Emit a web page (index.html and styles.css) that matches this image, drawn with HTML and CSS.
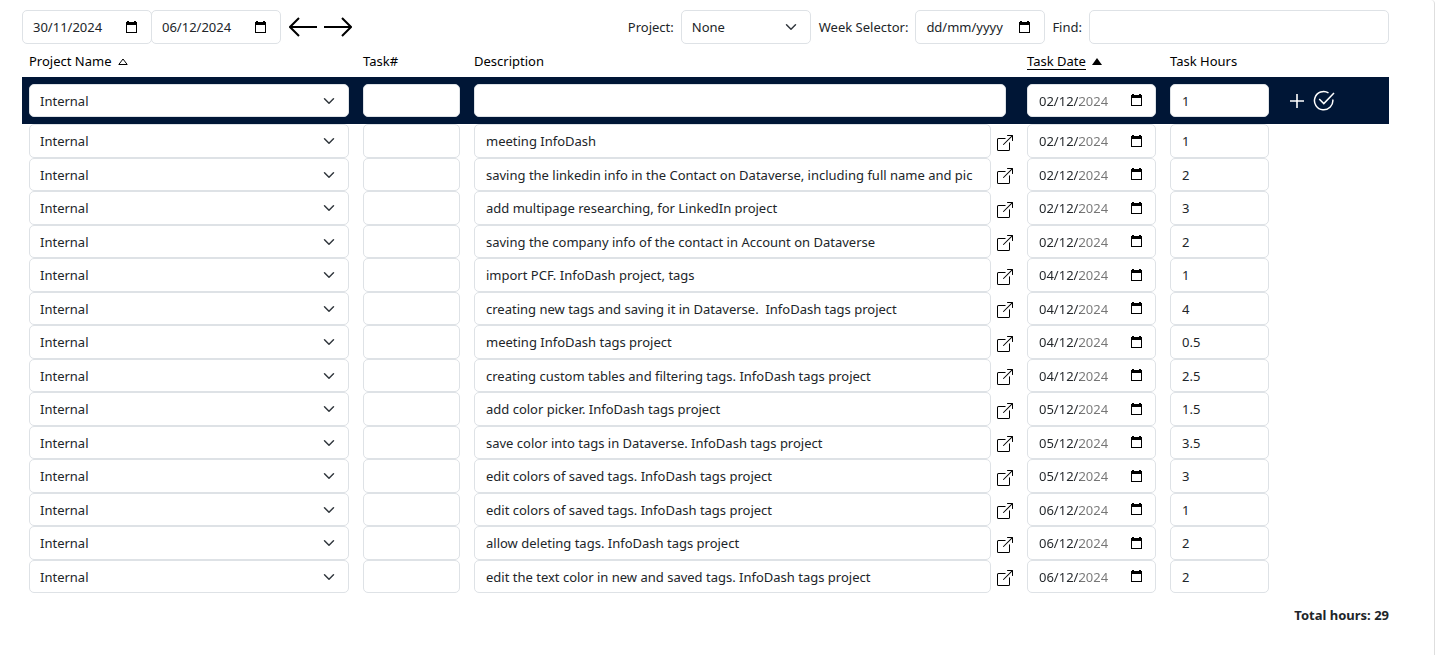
FILE: index.html
```html
<!DOCTYPE html>
<html lang="en-GB">
<head>
<meta charset="utf-8">
<title>Timesheet</title>
<link rel="stylesheet" href="styles.css">
</head>
<body>
<svg class="sprite" aria-hidden="true">
  <symbol id="calendar" viewBox="0 0 13 14"><path d="M12 2h-1V1H9v1H4V1H2v1H1v11h11zM11 12H2V5h9z"/></symbol>
  <symbol id="open" viewBox="0 0 16 16"><path d="M8.636 3.5a.5.5 0 0 0-.5-.5H1.5A1.5 1.5 0 0 0 0 4.500v10A1.500 1.500 0 0 0 1.500 16h10a1.500 1.500 0 0 0 1.500-1.500V7.864a.5.5 0 0 0-1 0V14.500a.5.5 0 0 1-.5.5h-10a.5.5 0 0 1-.5-.5v-10a.5.5 0 0 1 .5-.5h6.636a.5.5 0 0 0 .5-.5z"/><path d="M16 .5a.5.5 0 0 0-.5-.5h-5a.5.5 0 0 0 0 1h3.793L6.146 9.146a.5.5 0 1 0 .708.708L15 1.707V5.500a.5.5 0 0 0 1 0z"/></symbol>
</svg>
<main class="panel">
  <form class="toolbar">
    <div class="range">
      <span class="field date"><input type="text" aria-label="From date" value="30/11/2024"><button type="button" aria-label="Pick from date"><svg><use href="#calendar"/></svg></button></span>
      <span class="field date"><input type="text" aria-label="To date" value="06/12/2024"><button type="button" aria-label="Pick to date"><svg><use href="#calendar"/></svg></button></span>
    </div>
    <div class="arrows">
      <button type="button" aria-label="Previous week"><svg viewBox="0 0 28 20"><path d="M28 10H1M10 1 1 10l9 9"/></svg></button>
      <button type="button" aria-label="Next week"><svg viewBox="0 0 28 20"><path d="M0 10h27M18 1l9 9-9 9"/></svg></button>
    </div>
    <div class="filters">
      <label for="project">Project:</label>
      <select class="field select" id="project"><option>None</option></select>
      <label for="week">Week Selector:</label>
      <span class="field date"><input type="text" id="week" value="dd/mm/yyyy"><button type="button" aria-label="Pick week"><svg><use href="#calendar"/></svg></button></span>
      <label for="find">Find:</label>
      <input class="field find" type="text" id="find">
    </div>
  </form>
  <table class="sheet">
    <colgroup><col class="c-project"><col class="c-task"><col><col class="c-date"><col class="c-hours"><col class="c-actions"></colgroup>
    <thead>
      <tr>
        <th><button type="button" class="sort">Project Name <svg viewBox="0 0 10 7"><path class="hollow" d="M.8 6.500 5 1l4.200 5.500z"/></svg></button></th>
        <th>Task#</th>
        <th>Description</th>
        <th><button type="button" class="sort"><span class="sorted">Task Date</span> <svg viewBox="0 0 10 7"><path d="M0 7 5 0l5 7z"/></svg></button></th>
        <th>Task Hours</th>
        <th></th>
      </tr>
      <tr class="entry">
        <td><select class="field select" aria-label="Project"><option>Internal</option></select></td>
        <td><input class="field" type="text" aria-label="Task number"></td>
        <td class="new-description"><input class="field" type="text" aria-label="Description"></td>
        <td><span class="field date"><input type="text" aria-label="Date" value="02/12/2024"><button type="button" aria-label="Pick date"><svg><use href="#calendar"/></svg></button></span></td>
        <td><input class="field" type="text" aria-label="Hours" value="1"></td>
        <td><div class="actions">
          <button type="button" aria-label="Add"><svg class="plus" viewBox="0 0 14 14"><path d="M7 0v14M0 7h14"/></svg></button>
          <button type="button" aria-label="Save"><svg class="check" viewBox="0 0 22 22"><path d="M19.800 9.500A9.200 9.200 0 1 1 15.500 2.800M6.200 9l4.600 4.600L21 3"/></svg></button>
        </div></td>
      </tr>
    </thead>
    <tbody id="rows"></tbody>
  </table>
  <p class="total">Total hours: <span id="total"></span></p>
</main>
<template id="row">
  <tr>
    <td><select class="field select" aria-label="Project"><option>Internal</option></select></td>
    <td><input class="field" type="text" aria-label="Task number"></td>
    <td><div class="description"><input class="field text" type="text" aria-label="Description"><button type="button" aria-label="Open task"><svg><use href="#open"/></svg></button></div></td>
    <td><span class="field date"><input class="day" type="text" aria-label="Date"><button type="button" aria-label="Pick date"><svg><use href="#calendar"/></svg></button></span></td>
    <td><input class="field hours" type="text" aria-label="Hours"></td>
    <td></td>
  </tr>
</template>
<script src="rows.js"></script>
</body>
</html>
```
FILE: rows.js
```js
const tasks = [
  ["meeting InfoDash", "02/12/2024", 1],
  ["saving the linkedin info in the Contact on Dataverse, including full name and pic", "02/12/2024", 2],
  ["add multipage researching, for LinkedIn project", "02/12/2024", 3],
  ["saving the company info of the contact in Account on Dataverse", "02/12/2024", 2],
  ["import PCF. InfoDash project, tags", "04/12/2024", 1],
  ["creating new tags and saving it in Dataverse.  InfoDash tags project", "04/12/2024", 4],
  ["meeting InfoDash tags project", "04/12/2024", 0.5],
  ["creating custom tables and filtering tags. InfoDash tags project", "04/12/2024", 2.5],
  ["add color picker. InfoDash tags project", "05/12/2024", 1.5],
  ["save color into tags in Dataverse. InfoDash tags project", "05/12/2024", 3.5],
  ["edit colors of saved tags. InfoDash tags project", "05/12/2024", 3],
  ["edit colors of saved tags. InfoDash tags project", "06/12/2024", 1],
  ["allow deleting tags. InfoDash tags project", "06/12/2024", 2],
  ["edit the text color in new and saved tags. InfoDash tags project", "06/12/2024", 2]
];
const template = document.getElementById("row");
const rows = document.getElementById("rows");
for (const [text, day, hours] of tasks) {
  const row = template.content.cloneNode(true);
  row.querySelector(".text").value = text;
  row.querySelector(".day").value = day;
  row.querySelector(".hours").value = hours;
  rows.append(row);
}
document.getElementById("total").textContent = tasks.reduce((sum, task) => sum + task[2], 0);
```
FILE: styles.css
```css
* { box-sizing: border-box; }
body { margin: 0; background: #fff; color: #212529; font: 13px/20px "Noto Sans", "Open Sans", sans-serif; }
button, input, select { font: inherit; color: inherit; }
button { display: flex; padding: 0; border: 0; background: none; cursor: pointer; }
.sprite { display: none; }
.panel { min-height: 100vh; margin-right: 1px; padding: 10px 45px 20px 22px; border-right: 1px solid #dedede; border-top-right-radius: 4px; }
.toolbar { display: flex; align-items: center; height: 34px; }
.field { display: block; width: 100%; height: 33px; padding: 0 11px; border: 1px solid #dee2e6; border-radius: 5px; background-color: #fff; }
.toolbar .field { height: 34px; width: 130px; }
.select { appearance: none; padding: 0 10px; background: #fff url("data:image/svg+xml,%3Csvg xmlns='http://www.w3.org/2000/svg' viewBox='0 0 16 16'%3E%3Cpath fill='none' stroke='%23343a40' stroke-linecap='round' stroke-linejoin='round' stroke-width='2' d='m2 5 6 6 6-6'/%3E%3C/svg%3E") no-repeat right 11px center / 16px 12px; }
.date { display: flex; align-items: center; padding: 0 12px 0 11px; }
.toolbar .date { padding: 0 13px 0 10px; }
.date input { flex: 1; min-width: 0; width: 0; padding: 0; border: 0; background: none; }
.date button { padding-bottom: 1px; }
.date svg { width: 13px; height: 14px; fill: #000; }
.sheet .date input { color: transparent; background: linear-gradient(90deg, #212529 41px, #757575 41px); background-clip: text; -webkit-background-clip: text; }
.range { display: flex; }
.range .field + .field { margin-left: -1px; }
.arrows { display: flex; gap: 7px; margin-left: 8px; }
.arrows svg { width: 28px; height: 20px; fill: none; stroke: #000; stroke-width: 2; }
.filters { display: flex; align-items: center; gap: 7px; margin-left: auto; }
.filters .select { margin-right: 1px; }
.toolbar .find { width: 300px; }
.sheet { width: 100%; table-layout: fixed; border-collapse: collapse; }
.c-project { width: 334px; }
.c-task { width: 111px; }
.c-date { width: 143px; }
.c-hours, .c-actions { width: 113px; }
th { height: 33px; padding: 0 7px; text-align: left; font-weight: 400; color: #000; }
td { padding: 0 7px; }
.sort { align-items: center; gap: 6px; }
.sort svg { width: 10px; height: 7px; margin-top: 2px; }
.hollow { fill: none; stroke: #000; }
.sorted { line-height: 16px; box-shadow: 0 1px #000; }
.entry { background: #001636; }
.entry td { padding: 7px; }
.entry .new-description { padding-right: 14px; }
.actions { display: flex; align-items: center; gap: 9px; padding-left: 7px; }
.actions svg { fill: none; stroke: #fff; }
.plus { width: 14px; height: 14px; stroke-width: 1.6; }
.check { width: 22px; height: 22px; stroke-width: 1.5; }
tbody .field { height: 34px; }
tbody tr:nth-child(even) .field { height: 33px; }
.description { display: flex; align-items: center; gap: 6px; }
.description button { padding-top: 3px; }
.description svg { width: 16px; height: 16px; }
.total { margin: 12px 0 0; text-align: right; font-weight: 700; }
```
